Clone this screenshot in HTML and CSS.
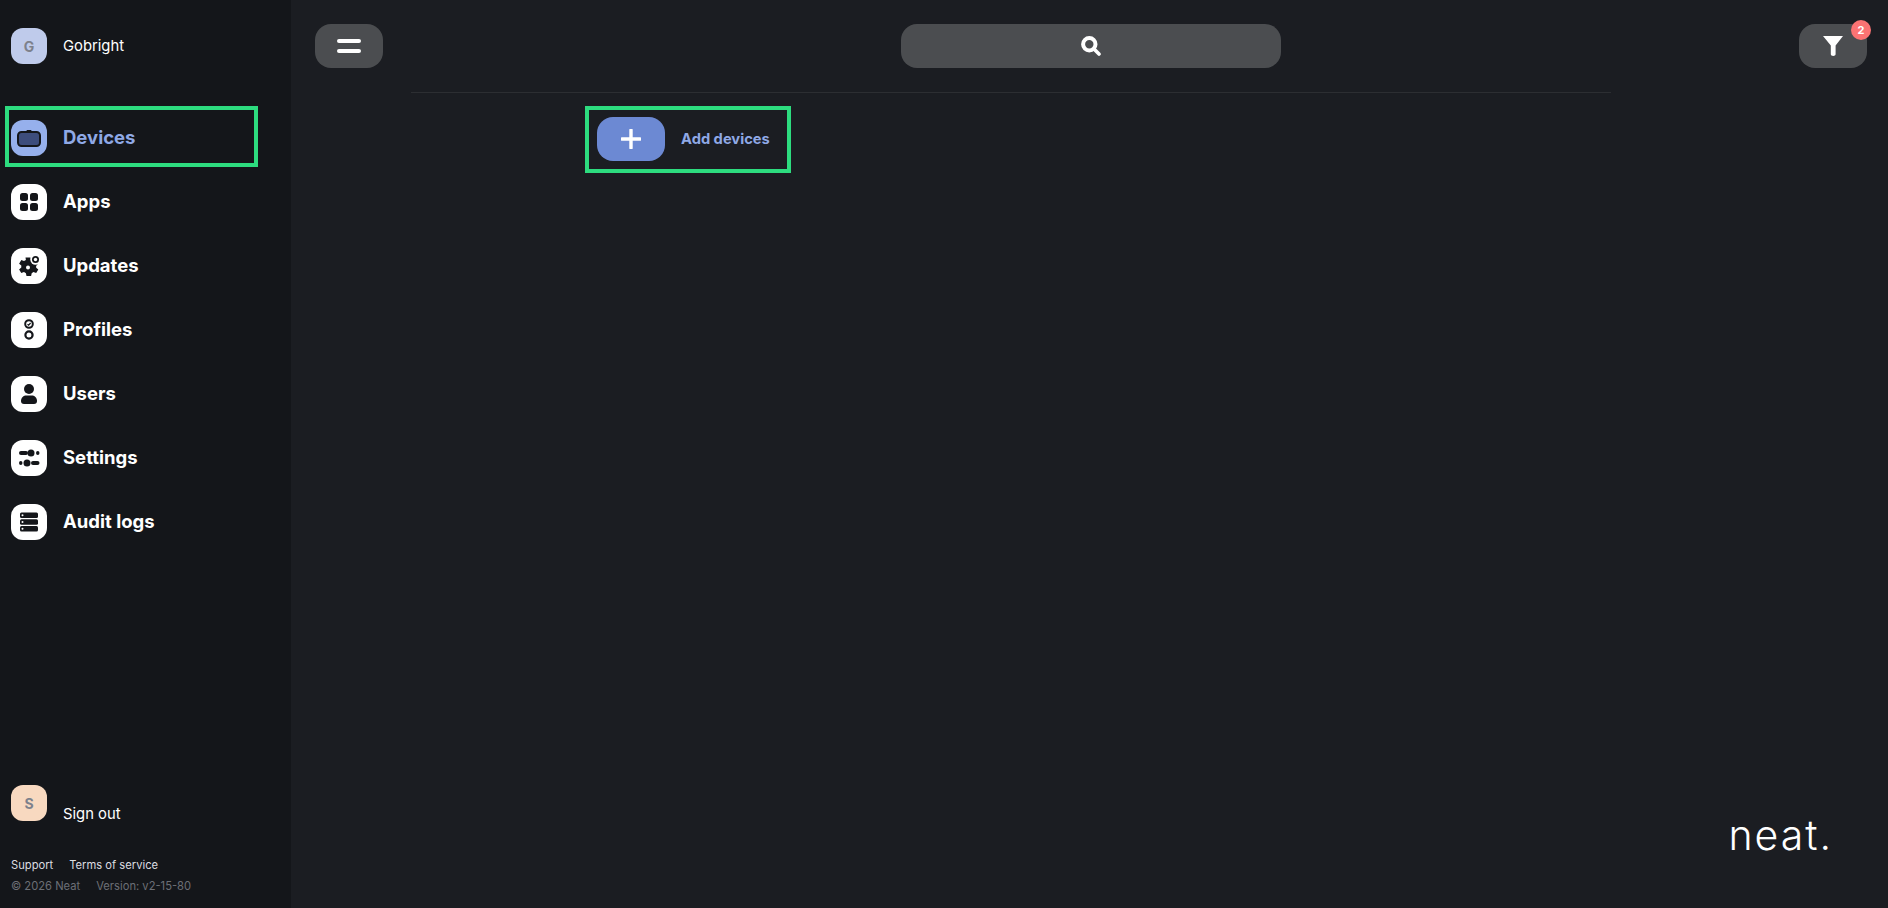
FILE: index.html
```html
<!DOCTYPE html>
<html lang="en">
<head>
    <meta charset="UTF-8">
    <title>Devices</title>
    <link rel="stylesheet" href="styles.css">
</head>
<body>
    <aside class="sidebar">
        <div class="account">
            <div class="tile tile-account">G</div>
            <span class="account-name">Gobright</span>
        </div>

        <nav class="nav">
            <a class="nav-item nav-item-active">
                <span class="tile tile-active">
                    <svg viewBox="0 0 36 36" width="36" height="36"><rect x="7" y="12" width="22" height="14" rx="3.500" fill="#3d4d7c" stroke="#14161a" stroke-width="2"/><rect x="15.500" y="10" width="5" height="1.600" rx=".8" fill="#14161a"/></svg>
                </span>
                <span class="nav-label">Devices</span>
            </a>
            <a class="nav-item">
                <span class="tile">
                    <svg viewBox="0 0 36 36" width="36" height="36"><rect x="9" y="9" width="8" height="8" rx="2.500"/><rect x="19" y="9" width="8" height="8" rx="2.500"/><rect x="9" y="19" width="8" height="8" rx="2.500"/><rect x="19" y="19" width="8" height="8" rx="2.500"/></svg>
                </span>
                <span class="nav-label">Apps</span>
            </a>
            <a class="nav-item">
                <span class="tile">
                    <svg viewBox="0 0 36 36" width="36" height="36"><path d="M14.500 9.500h5l.6 2.800 2 1 2.600-1 2.400 3.400-2 2.200.1 1.800 2.100 1.700-2.100 3.600-2.800-.9-1.700 1.100-.6 2.800h-4.600l-.6-2.800-1.900-1.100-2.700.9-2.200-3.600 2.200-1.900v-1.900l-2.200-1.900 2.200-3.600 2.700 1 1.900-1.200z"/><circle cx="17" cy="19.500" r="2" fill="#fff"/><circle cx="24.500" cy="11.500" r="5.200" fill="#fff"/><circle cx="24.500" cy="11.500" r="3.500"/><circle cx="24.500" cy="11.500" r="1.700" fill="#fff"/></svg>
                </span>
                <span class="nav-label">Updates</span>
            </a>
            <a class="nav-item">
                <span class="tile">
                    <svg viewBox="0 0 36 36" width="36" height="36"><circle cx="18" cy="12" r="3.800" fill="none" stroke="#14161a" stroke-width="2"/><path d="M16.500 12.200l1.100 1 2-2.200" fill="none" stroke="#14161a" stroke-width="1.200"/><circle cx="18" cy="23" r="3.600" fill="none" stroke="#14161a" stroke-width="2.200"/></svg>
                </span>
                <span class="nav-label">Profiles</span>
            </a>
            <a class="nav-item">
                <span class="tile">
                    <svg viewBox="0 0 36 36" width="36" height="36"><circle cx="18" cy="13" r="5"/><path d="M10 25c0-3.500 2.500-5.500 5.500-5.500h5c3 0 5.500 2 5.500 5.500 0 2-1 3-3 3H13c-2 0-3-1-3-3z"/></svg>
                </span>
                <span class="nav-label">Users</span>
            </a>
            <a class="nav-item">
                <span class="tile">
                    <svg viewBox="0 0 36 36" width="36" height="36"><rect x="8" y="11" width="9" height="4" rx="2"/><circle cx="20" cy="13" r="3.500"/><rect x="25" y="11" width="3.500" height="4" rx="2"/><rect x="8" y="21" width="3.500" height="4" rx="2"/><circle cx="16" cy="23" r="3.500"/><rect x="20" y="21" width="8.500" height="4" rx="2"/></svg>
                </span>
                <span class="nav-label">Settings</span>
            </a>
            <a class="nav-item">
                <span class="tile">
                    <svg viewBox="0 0 36 36" width="36" height="36"><rect x="9" y="8.500" width="18" height="5.400" rx="1.500"/><rect x="9" y="15.300" width="18" height="5.400" rx="1.500"/><rect x="9" y="22.100" width="18" height="5.400" rx="1.500"/><circle cx="11.500" cy="11.200" r="1" fill="#fff"/><circle cx="11.500" cy="18" r="1" fill="#fff"/><circle cx="11.500" cy="24.800" r="1" fill="#fff"/></svg>
                </span>
                <span class="nav-label">Audit logs</span>
            </a>
        </nav>

        <div class="sign-out">
            <div class="tile tile-signout">S</div>
            <span class="sign-out-label">Sign out</span>
        </div>

        <div class="legal">
            <div class="legal-links"><a>Support</a><a>Terms of service</a></div>
            <div class="legal-meta"><span>© 2026 Neat</span><span>Version: v2-15-80</span></div>
        </div>
    </aside>

    <main class="main">
        <header class="topbar">
            <button class="pill">
                <svg viewBox="0 0 24 14" width="24" height="14"><rect y="0" width="24" height="4" rx="2" fill="#fff"/><rect y="10" width="24" height="4" rx="2" fill="#fff"/></svg>
            </button>
            <button class="pill search">
                <svg viewBox="0 0 20 20" width="20" height="20"><circle cx="8.300" cy="8.300" r="6.200" fill="none" stroke="#fff" stroke-width="4"/><path d="M13.500 13.500l4.500 4.500" stroke="#fff" stroke-width="3.600" stroke-linecap="round"/></svg>
            </button>
            <button class="pill filter">
                <svg viewBox="0 0 20 20" width="20" height="20"><path d="M0 0h20l-7.400 9.500v8.800c0 2.200-4.800 2.200-4.800 0V9.500z" fill="#fff"/></svg>
                <span class="badge">2</span>
            </button>
        </header>

        <section class="content">
            <div class="add-row">
                <button class="pill pill-primary">
                    <svg viewBox="0 0 20 20" width="20" height="20"><path d="M10 1v18M1 10h18" stroke="#fff" stroke-width="3.400" stroke-linecap="round"/></svg>
                </button>
                <span class="add-label">Add devices</span>
            </div>
        </section>

        <footer class="brand">
            <span class="logo">neat.</span>
        </footer>
    </main>
</body>
</html>
```

FILE: styles.css
```css
* {
    box-sizing: border-box;
}

body {
    display: flex;
    height: 100vh;
    margin: 0;
    overflow: hidden;
    font-family: 'Inter', 'Liberation Sans', sans-serif;
    color: white;
    background-color: #1b1d22;
}

/* Sidebar */
.sidebar {
    display: flex;
    flex-direction: column;
    flex: none;
    width: 291px;
    padding-top: 28px;
    background-color: #14161a;
}

.tile {
    display: flex;
    flex: none;
    align-items: center;
    justify-content: center;
    width: 36px;
    height: 36px;
    border-radius: 12px;
    background-color: white;
    fill: #14161a;
}

.tile svg {
    display: block;
}

.tile-account,
.tile-signout {
    font-size: 14px;
    font-weight: 700;
    color: #7d818c;
}

.tile-account {
    background-color: #bfcbeb;
}

.tile-signout {
    background-color: #f8d9c0;
}

.tile-active {
    background-color: #96b0ec;
}

.account {
    display: flex;
    align-items: center;
    gap: 16px;
    margin-left: 11px;
}

.account-name {
    margin-bottom: 1px;
    font-size: 14.8px;
}

.nav {
    display: flex;
    flex-direction: column;
    gap: 28px;
    margin-top: 42px;
}

.nav-item {
    display: flex;
    align-items: center;
    gap: 16px;
    margin-left: 11px;
    font-size: 18.5px;
    font-weight: 700;
}

.nav-label {
    margin-bottom: 2px;
}

.nav-item-active {
    width: 253px;
    margin: 0 0 -11px 5px;
    padding: 10px 0 7px 2px;
    border: 4px solid #2ddc7f;
    color: #8fa9e6;
}

.sign-out {
    display: flex;
    gap: 16px;
    margin: auto 0 0 11px;
}

.sign-out-label {
    margin-top: 19px;
    font-size: 14.8px;
    line-height: 20px;
}

.legal {
    margin: 31px 0 11px 11px;
    font-size: 11.2px;
    line-height: 21px;
}

.legal-links,
.legal-meta {
    display: flex;
    gap: 16px;
}

.legal-links {
    color: #dcdde0;
}

.legal-meta {
    color: #6c6f76;
}

/* Main area */
.main {
    display: flex;
    flex-direction: column;
    flex: 1;
    min-width: 0;
}

.topbar {
    display: flex;
    align-items: center;
    justify-content: space-between;
    height: 92px;
    padding: 0 21px 0 24px;
}

.pill {
    position: relative;
    display: flex;
    align-items: center;
    justify-content: center;
    width: 68px;
    height: 44px;
    padding: 0;
    border: none;
    border-radius: 16px;
    background-color: #4b4d50;
}

.search {
    width: 380px;
}

.badge {
    position: absolute;
    top: -4px;
    right: -4px;
    width: 20px;
    height: 20px;
    border-radius: 50%;
    font-family: 'Inter', sans-serif;
    font-size: 11px;
    font-weight: 700;
    line-height: 20px;
    color: white;
    background-color: #fb7373;
}

.content {
    width: 1200px;
    margin-left: 120px;
    padding-top: 13px;
    border-top: 1px solid #2c2e32;
}

.add-row {
    display: flex;
    align-items: center;
    gap: 16px;
    width: 206px;
    height: 67px;
    margin-left: 174px;
    padding: 0 0 2px 8px;
    border: 4px solid #2ddc7f;
}

.pill-primary {
    background-color: #6c89d3;
}

.add-label {
    font-size: 14.7px;
    font-weight: 700;
    color: #8fa9e6;
}

.brand {
    display: flex;
    justify-content: flex-end;
    margin-top: auto;
    padding: 0 55px 49px 0;
}

.logo {
    font-size: 41px;
    font-weight: 300;
    line-height: 48px;
    letter-spacing: 2px;
}
```
